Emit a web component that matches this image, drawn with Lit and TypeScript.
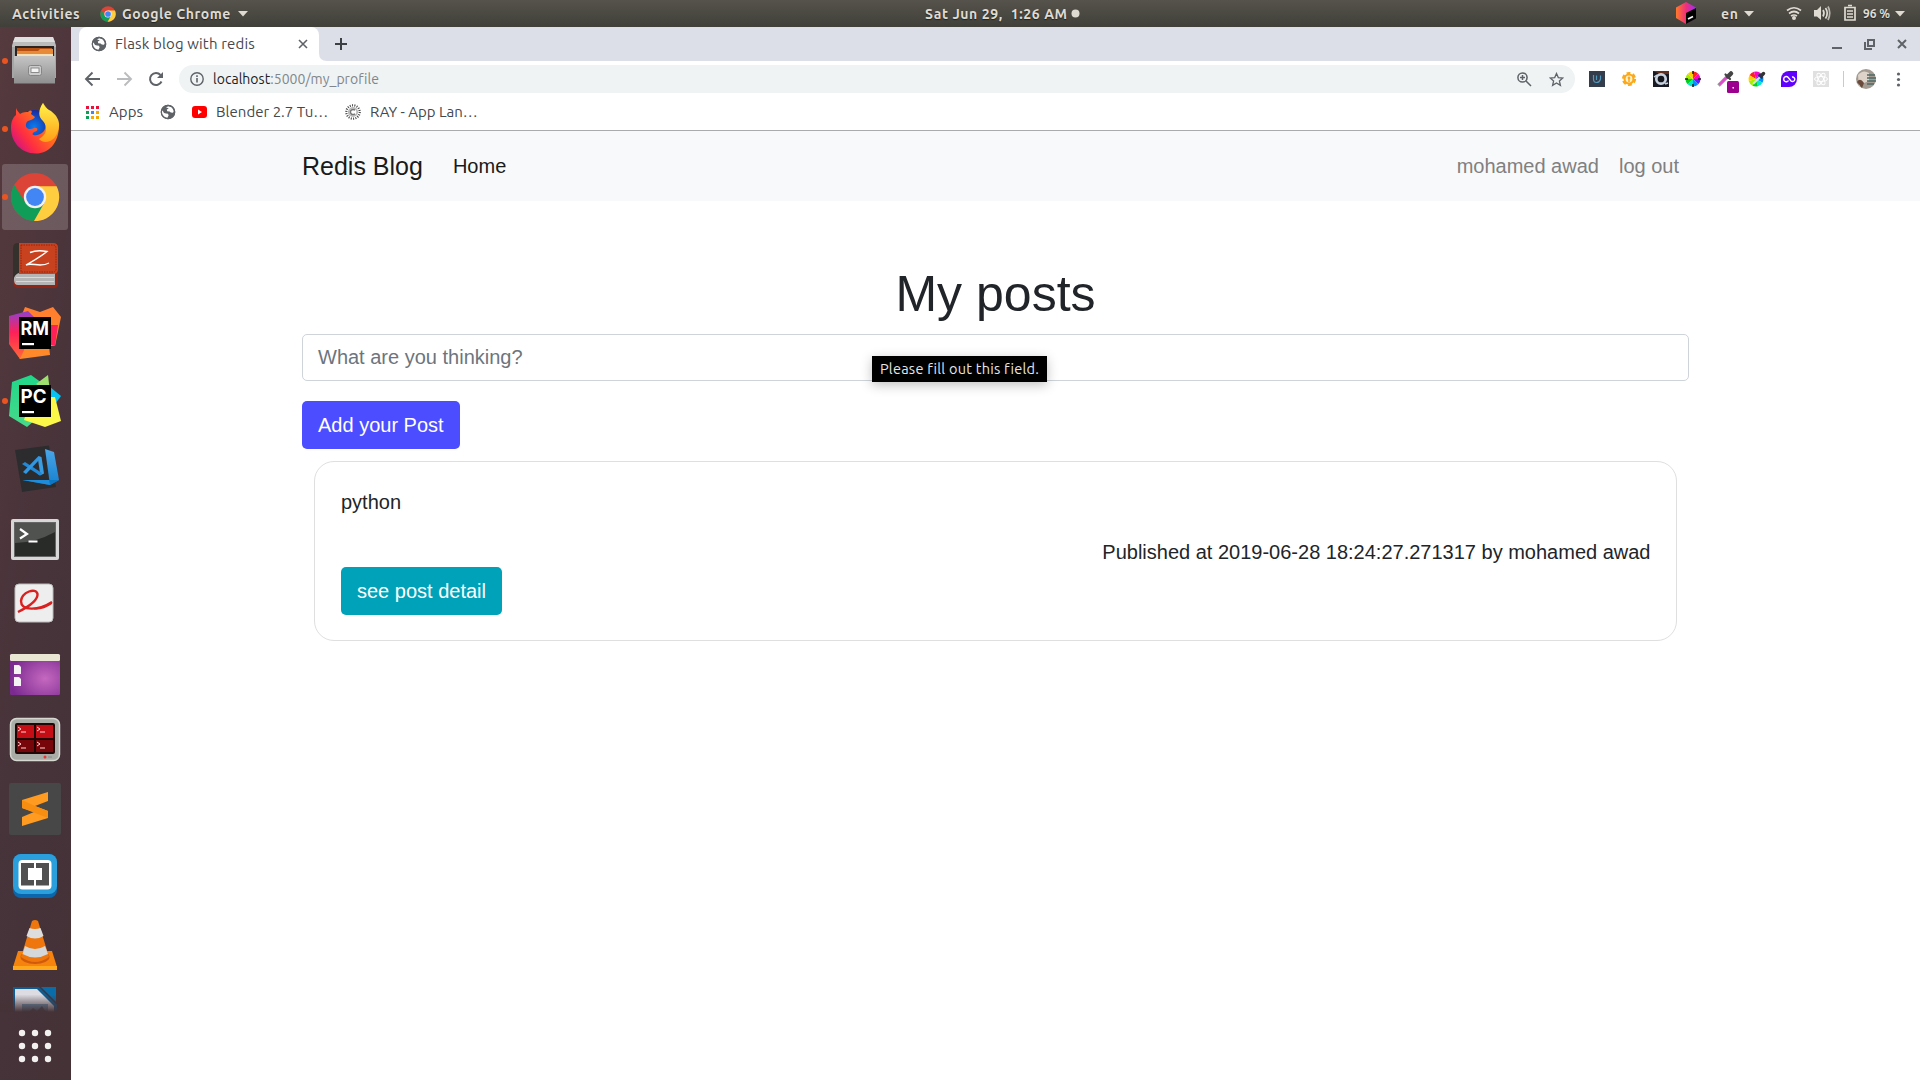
import { LitElement, html, svg, css } from "lit";
import { customElement } from "lit/decorators.js";

const globe = html`<svg class="ic" width="16" height="16" viewBox="0 0 16 16"><circle cx="8" cy="8" r="7.2" fill="#5f6368"/><path d="M2.600 6.500 4 9 6 9.500 8 9.800 8.600 11.500 7.200 14 4.500 13 2 10.500 1.800 7Z" fill="#fff"/><path d="M6 3.200 8.500 2.300 12 3.600 13.800 7 13 8.800 10.800 8.600 9.600 7.400 7.200 7.200 6.800 5.600 8.800 4.600Z" fill="#fff"/><circle cx="8" cy="8" r="6.700" fill="none" stroke="#5f6368" stroke-width="1.300"/></svg>`;

const chromeLogo = (cx: number, cy: number, r: number) => svg`
  <g transform="translate(${cx} ${cy}) scale(${r / 24})">
    <circle r="24" fill="#db4437"/>
    <path d="M-20.8-12A24 24 0 0 0 -1 24L10.4 6 0 0-9.6 5.5Z" fill="#0f9d58"/>
    <path d="M21.6-10.8A24 24 0 0 1 -1 24L9.8 5 0-10.8Z" fill="#ffcd40"/>
    <circle r="11.2" fill="#f1f1f1"/><circle r="8.9" fill="#4285f4"/>
  </g>`;

const dockIcons = [
  svg`<path d="M15 37H53L56 46V78H54V82H14V78H12V46Z" fill="#a5a6a6"/><path d="M15 37H53L55 42H13Z" fill="#dfdfdf"/><path d="M13 42H55L56 47H12Z" fill="#bcbcbc"/>
   <rect x="15" y="46" width="39" height="11" fill="#2d2320"/><path d="M17 48H52V56H17Z" fill="#b54f12"/><path d="M17 51H38L40 49H53V56H17Z" fill="#e88b39"/><path d="M17 54H53V56H17Z" fill="#f7e0b7"/>
   <path d="M14 56H55V83.500H14Z" fill="url(#steel)"/><rect x="28.500" y="65.500" width="13" height="10" rx="2" fill="#ccc" stroke="#858585"/><rect x="31" y="68" width="8" height="4.500" fill="#f4f4f4" stroke="#777" stroke-width=".8"/>`,
  svg`<circle cx="34" cy="127" r="17" fill="url(#ffblue)"/>
   <path d="M16 108C17 111 19 112 20 114 23 112 26 112 28 112 31 109 33 111 31 114L35 117C33 121 27 119 26 124 25 129 30 130 34 128 38 127 39 131 34 132 29 136 39 137 44 131 48 125 44 116 40 112L43 103 59 125C59 144 48 153.500 36 153.500 20 153.500 11 141 11 128 11 122 13 117 16 115Z" fill="url(#fffire)"/>
   <path d="M43 103C38 110 38 117 43 121 48 127 47 135 39 139 44 145 55 142 58 131 62 121 55 113 49 110 46 108 44 106 43 103Z" fill="url(#ffyellow)"/>`,
  svg`<rect x="2" y="164" width="66" height="66" rx="3" fill="#fff" opacity=".18"/>${chromeLogo(35, 197, 24)}`,
  svg`<path d="M13 248Q13 243 18 243H53Q58 243 58 248V284Q58 288 54 288H17Q13 287 13 281Z" fill="#8f2615"/><path d="M14 277Q14 273 18 273H55V285H18Q14 285 14 280Z" fill="#b4b4b4"/><path d="M16 277.500H54M16 281.500H54" stroke="#d8d8d8"/>
   <path d="M19 243H53Q58 243 58 248V269Q58 274 53 274H19Z" fill="#c9421f"/><path d="M13 248Q13 243 18 243H19V273Q15 274 13 280Z" fill="#34312c"/><path d="M21 245H53Q56 245 56 248V269Q56 272 53 272H21Z" fill="none" stroke="#7d2111" stroke-width=".8" stroke-dasharray="1.500 1"/>
   <path d="M30 252.500Q37 249.500 47 251.500C40 257 35 260 26 265 32 262 40 268 49 263" fill="none" stroke="#fff" stroke-width="1.400"/>`,
  svg`<path d="M25 307 40 312 53 307 61 317 55 346 49 346 50 355 20 359 15 349 19 322Z" fill="url(#rmb)"/><path d="M9 316 28 311 35 318 24 350 20 359 9 344Z" fill="url(#rma)"/><path d="M51 325H58L55 346 48 344Z" fill="#ff2058"/><rect x="19" y="317" width="32" height="32"/><text x="20.500" y="334.500" class="jb" textLength="28.500" lengthAdjust="spacingAndGlyphs">RM</text><rect x="22" y="343" width="12" height="2.200" fill="#fff"/>`,
  svg`<path d="M12 382 31 375 42 383 35 420 27 427 9 416Z" fill="url(#pca)"/><path d="M48 375 50 392 36 384Z" fill="#9ee06f"/><path d="M50 387 61 396 52 408Z" fill="#07c3f2"/><path d="M51 397H55L61 421 45 427 24 420 28 407Z" fill="#fcf84a"/><rect x="19" y="385" width="32" height="32"/><text x="20.500" y="402.500" class="jb" textLength="26" lengthAdjust="spacingAndGlyphs">PC</text><rect x="22" y="411" width="12" height="2.200" fill="#fff"/>`,
  svg`<path d="M15 450 49 445.500 56 487 22 492Z" fill="#2c2c2f"/><path d="M45 449 54 452 59 480 50 485Z" fill="url(#vs)"/><path d="M22.500 480 46 480 59 480 50 485Z" fill="#0b76c4"/><path d="M22.500 480 50 485 49 480Z" fill="#1e8cd8"/>
   <path d="M38.500 456 41.500 457 44 473.500 40 475.500 37 473.500 40 473 38 459.500Z" fill="#3a9de2"/><path d="M22 464 25 462 42 473 40 475.500Z" fill="#2188d6"/><path d="M38.500 456 40 459 26 474 23 472Z" fill="#3296e0"/>`,
  svg`<rect x="11" y="519" width="48" height="41" rx="2" fill="#d7d7d7"/><rect x="14.500" y="522.500" width="41" height="34" fill="#292b29" stroke="#666"/><path d="M15 523H55V532Q35 543 15 543Z" fill="#505250"/><path d="M20 529 27 534 20 538.500" fill="none" stroke="#fff" stroke-width="2.200"/><path d="M28.500 541.500H37.500" stroke="#fff" stroke-width="2"/>`,
  svg`<rect x="15" y="584" width="38" height="38" rx="4" fill="#eee" stroke="#bdbdbd"/><path d="M18 612C30 606 38 600 37.500 594 36 587 22 592 21 601 21 611 38 611 52 602" fill="none" stroke="#d92121" stroke-width="2.400"/><path d="M34 608.500Q44 607 52 601.500V604Q44 610 34 609.500Z" fill="#d92121"/>`,
  svg`<rect x="10" y="654" width="50" height="41" rx="1.500" fill="url(#purple)"/><rect x="10" y="654" width="50" height="7" rx="1.500" fill="#eae6d4"/><path d="M14 665H19L21 667V674H14ZM14 677H19L21 679V686H14Z" fill="#f4f4f4"/>`,
  svg`<rect x="10.500" y="718.500" width="49" height="42" rx="6" fill="#aaada7" stroke="#d7d8d2" stroke-width="1.500"/><rect x="15" y="723" width="40" height="31" rx="2" fill="#220505"/><path d="M17 725H34V738H17ZM36 725H53V738H36Z" fill="#c40d14"/><path d="M17 740H34V752H17ZM36 740H53V752H36Z" fill="#760609"/><path d="M18 727 21 729 18 731M21 732H26M37 727 40 729 37 731M40 732H45M18 742 21 744 18 746M21 748H26M37 742 40 744 37 746M40 748H45" fill="none" stroke="#ffd1d1"/><circle cx="45" cy="757" r="1.500" fill="#e33"/><path d="M48 757H52" stroke="#888"/>`,
  svg`<rect x="9" y="783" width="52" height="52" rx="2" fill="#474747"/><path d="M22 800 48 792V801L35 806 48 811V818L22 826V817L34 812 22 808Z" fill="#ff9b20"/><path d="M22 800V808L48 818V811L35 806Z" fill="#f78e12"/>`,
  svg`<rect x="13" y="854" width="44" height="44" rx="8" fill="#0b66ab"/><rect x="13" y="854" width="44" height="40" rx="8" fill="#2a9fdc"/><rect x="18.500" y="860" width="33" height="29.500" rx="4" fill="#fff"/><path d="M21 863H34V868H28V880H34V885.500H21ZM36 863H49V885.500H36V880H42V868H36Z" fill="#505050"/>`,
  svg`<path d="M18 951H52L57 967V969.500H13V967Z" fill="#f5830d"/><path d="M13 966H57V970H13Z" fill="#ffa81d"/><ellipse cx="35" cy="957" rx="14.500" ry="7" fill="#cf5a0c"/><path d="M32 921Q35 919 38 921L49 957Q35 967 21 957Z" fill="#ee760c"/><path d="M29.500 928Q35 930 40.500 928L43.500 936Q35 941 26.500 936Z" fill="#ddd"/><path d="M25 946Q35 952 45 946L48 954Q35 961 22.500 954Z" fill="#d4d8da"/>`,
];

const lastIcon = svg`<path d="M13 987H39L57 1005V1014H13Z" fill="#0b5d93"/><path d="M15 989H37L54 1006V1014H15Z" fill="#dddce2"/><path d="M41 987H56V1002Z" fill="#0a6da9"/><path d="M22 1004H48V1014H22Z" fill="#6f9dbb"/><path d="M27 1014 33 1008 37 1011 42 1006 47 1014Z" fill="#43505e"/>`;

@customElement("app-root")
export class AppRoot extends LitElement {
  static styles = css`
    :host { display: block; }
    * { box-sizing: border-box; }
    .desktop { width: 1920px; height: 1080px; display: grid; grid-template: 27px 1fr / 71px 1fr; overflow: hidden; background: #fff; font-family: Ubuntu, "Noto Sans", sans-serif; white-space: nowrap; }
    svg { display: block; flex: none; }
    .top { grid-column: 1 / 3; display: grid; grid-template-columns: 925px 1fr auto; align-items: center; background: linear-gradient(#55534b, #403f39); color: #dfdbd2; font-size: 14px; font-weight: 600; text-shadow: 0 1px 1px #222; }
    .row { display: flex; align-items: center; }
    .act { padding-left: 12px; width: 100px; letter-spacing: .6px; }
    .appname { padding-left: 6px; width: 122px; letter-spacing: .55px; }
    .clock { gap: 4px; }
    .time { width: 142px; letter-spacing: .6px; }
    .dock { display: flex; flex-direction: column; background: linear-gradient(100deg, #553a3e, #47333a 55%, #443237); }
    .last { height: 33px; overflow: hidden; }
    .browser { display: flex; flex-direction: column; min-width: 0; }
    .strip { height: 34px; background: #dcdfe7; display: flex; justify-content: space-between; color: #45484c; }
    .tab { margin-left: 8px; width: 240px; height: 34px; background: #fff; border-radius: 8px 8px 0 0; display: flex; align-items: center; padding-left: 12px; font-size: 15px; }
    .tabtitle { padding: 0 0 2px 8px; width: 191px; flex: none; letter-spacing: .15px; }
    .foot { align-self: flex-end; }
    .wins { gap: 22px; padding-right: 13px; }
    .tools { height: 38px; display: flex; align-items: center; padding-left: 13px; padding-bottom: 2px; }
    .nav { gap: 15px; }
    .omni { margin-left: 15px; width: 1396px; height: 28px; border-radius: 14px; background: #eff3f4; display: flex; align-items: center; padding: 0 11px; font-size: 14px; color: #80868b; }
    .url { flex: 1; padding-left: 9px; letter-spacing: .03px; }
    .host { color: #202124; }
    .starwrap { gap: 17px; }
    .marks { height: 31px; display: flex; align-items: center; padding-left: 15px; padding-bottom: 5px; font-size: 15px; color: #45484c; }
    .marks > span:not(.mg) { padding-bottom: 2px; }
    .m1 { padding-left: 10px; width: 61px; letter-spacing: .1px; } .m2 { padding-left: 9px; width: 138px; letter-spacing: .02px; } .m3 { padding-left: 9px; letter-spacing: -.02px; }
    .mg { margin-right: 16px; }
    .page { flex: 1; border-top: 1px solid #aaabad; background: #fff; font: 20px/30px "Liberation Sans", Arial, sans-serif; color: #212529; position: relative; }
    .navbar { height: 70px; background: #f8f9fb; display: flex; align-items: center; padding: 0 241px 0 231px; color: #1a1a1a; }
    .brand { font-size: 25px; margin-right: 30px; }
    .muted { color: #808080; margin-left: 20px; }
    .push { margin-left: auto; }
    .container { width: 1387px; margin-left: 231px; padding-top: 63px; }
    h1 { margin: 0 0 10px; text-align: center; font-size: 50px; line-height: 60px; font-weight: 400; }
    .field { height: 47px; border: 1px solid #ced4da; border-radius: 5px; padding: 0 15px; line-height: 45px; color: #6c757d; margin-bottom: 20px; }
    .btn { display: inline-flex; height: 48px; align-items: center; padding: 0 16px; border-radius: 5px; color: #fff; background: #4b4dff; }
    .form { display: flex; flex-direction: column; align-items: stretch; }
    .form .btn { align-self: flex-start; }
    .card { margin: 12px 12px 0; height: 180px; border: 1px solid #dfdfdf; border-radius: 20px; padding: 25px 25.500px 25px 26px; display: flex; flex-direction: column; align-items: flex-start; }
    .pub { align-self: flex-end; margin: 20px 0 0; }
    .info { background: #00a2b9; }
    .tip { position: absolute; left: 801px; top: 225px; height: 26px; width: 175px; background: #000; color: #e6e6e6; font: 14.500px/25px Ubuntu, "Noto Sans", sans-serif; letter-spacing: .25px; text-align: center; box-shadow: 0 3px 12px rgba(0,0,0,.25); }
    .jb { font: 700 18.500px Inter, sans-serif; fill: #fff; }
  `;

  render() {
    return html`
    <div class="desktop">
      <header class="top">
        <div class="row"><span class="act">Activities</span>
          <svg width="16" height="16" viewBox="0 0 16 16">${chromeLogo(8, 8, 7.7)}</svg>
          <span class="appname">Google Chrome</span><svg width="10" height="6"><path d="M0 0H10L5 5.500Z" fill="#dfdbd2"/></svg></div>
        <div class="row clock"><span class="time">Sat Jun 29,&nbsp; 1:26 AM</span><svg width="9" height="9"><circle cx="4.500" cy="4.500" r="4" fill="#dfdbd2"/></svg></div>
        ${this.tray()}
      </header>
      <nav class="dock">
        ${dockIcons.map((icon, i) => this.dockSlot(icon, i))}
        <div class="last"><svg width="71" height="33" viewBox="0 979 71 33"><defs><linearGradient id="fade" x2="0" y2="1"><stop offset=".3" stop-color="#443237" stop-opacity="0"/><stop offset="1" stop-color="#443237"/></linearGradient></defs>${lastIcon}<rect x="0" y="987" width="71" height="25" fill="url(#fade)"/></svg></div>
        <svg width="71" height="68" viewBox="0 1012 71 68">${[0, 1, 2].map((r) => [0, 1, 2].map((c) => svg`<circle cx="${22 + 13 * c}" cy="${1033 + 13 * r}" r="3.200" fill="#f3f1f0"/>`))}</svg>
      </nav>
      <main class="browser">
        <div class="strip">
          <div class="row"><div class="tab">${globe}<span class="tabtitle">Flask blog with redis</span>
            <svg width="10" height="10"><path d="M1 1 9 9M9 1 1 9" stroke="#5f6368" stroke-width="1.600"/></svg></div>
            <svg class="foot" width="8" height="8"><path d="M0 0Q0 8 8 8H0Z" fill="#fff"/></svg>
            <svg width="28" height="34"><path d="M8 17H20M14 11V23" stroke="#3c4043" stroke-width="2"/></svg></div>
          <div class="row wins">
            <svg width="10" height="12"><path d="M0 10H10" stroke="#5f6368" stroke-width="2"/></svg>
            <svg width="11" height="11"><path d="M1 3V10H8M4 1H10V7H4Z" fill="none" stroke="#5f6368" stroke-width="2"/></svg>
            <svg width="10" height="10"><path d="M1 1 9 9M9 1 1 9" stroke="#5f6368" stroke-width="2"/></svg></div>
        </div>
        <div class="tools">
          <div class="row nav">
            <svg width="18" height="16"><path d="M16 8H2.500M8.500 1.500 2 8 8.500 14.500" fill="none" stroke="#5f6368" stroke-width="1.900"/></svg>
            <svg width="16" height="16"><path d="M0 8H13.500M7.500 1.500 14 8 7.500 14.500" fill="none" stroke="#babcbe" stroke-width="1.900"/></svg>
            <svg width="16" height="16"><path d="M13.500 10.500A6 6 0 1 1 12.500 4" fill="none" stroke="#5f6368" stroke-width="2"/><path d="M15 1V7H9Z" fill="#5f6368"/></svg>
          </div>
          <div class="omni"><svg width="14" height="14"><circle cx="7" cy="7" r="6.200" fill="none" stroke="#5f6368" stroke-width="1.400"/><path d="M7 6V10.500M7 3.300V5" stroke="#5f6368" stroke-width="1.600"/></svg>
            <span class="url"><span class="host">localhost</span>:5000/my_profile</span>
            <div class="row starwrap"><svg width="15" height="15"><circle cx="5.500" cy="5.500" r="4.600" fill="none" stroke="#5f6368" stroke-width="1.500"/><path d="M9 9 14 14M3 5.500H8M5.500 3V8" stroke="#5f6368" stroke-width="1.500"/></svg>
            <svg width="15" height="15" viewBox="0 0 15 15"><path d="M7.500 1.500 9.300 5.600 13.800 6 10.400 9 11.400 13.400 7.500 11 3.600 13.400 4.600 9 1.200 6 5.700 5.600Z" fill="none" stroke="#5f6368" stroke-width="1.300"/></svg></div></div>
          ${this.extensions()}
        </div>
        <div class="marks">
          <svg width="13" height="13">${["#e8123c", "#e8123c", "#e8123c", "#0f9d58", "#4285f4", "#f4a800", "#0f9d58", "#f4a800", "#f4a800"].map((c, i) => svg`<rect x="${(i % 3) * 5}" y="${Math.floor(i / 3) * 5}" width="3" height="3" fill="${c}"/>`)}</svg>
          <span class="m1">Apps</span><span class="mg">${globe}</span>
          <svg width="15" height="12"><rect width="15" height="12" rx="3" fill="#f00"/><path d="M6 3.500V8.500L10 6Z" fill="#fff"/></svg><span class="m2">Blender 2.7 Tu…</span>
          <svg width="16" height="16"><circle cx="8" cy="8" r="6.700" fill="none" stroke="#444" stroke-width="2.200" stroke-dasharray="1 1.340"/><circle cx="8" cy="8" r="4.200" fill="none" stroke="#bbb" stroke-width="1.800"/><path d="M10 6.300A2.600 2.600 0 1 0 10 9.700" fill="none" stroke="#777" stroke-width="1.500"/></svg><span class="m3">RAY - App Lan…</span>
        </div>
        <div class="page">
          <div class="navbar"><span class="brand">Redis Blog</span><span>Home</span><span class="muted push">mohamed awad</span><span class="muted">log out</span></div>
          <div class="container"><h1>My posts</h1>
            <div class="form"><div class="field">What are you thinking?</div><div class="btn">Add your Post</div></div>
            <article class="card"><div>python</div><div class="pub">Published at 2019-06-28 18:24:27.271317 by mohamed awad</div><div class="btn info">see post detail</div></article>
          </div>
          <div class="tip">Please fill out this field.</div>
        </div>
      </main>
    </div>`;
  }

  dockSlot(icon: unknown, i: number) {
    const dot = [0, 1, 2, 5].includes(i);
    return html`<svg width="71" height="68" viewBox="0 ${27 + 68 * i} 71 68">
      <defs>
        <linearGradient id="steel" x2="0" y2="1"><stop stop-color="#c5c5c5"/><stop offset="1" stop-color="#8f8f8f"/></linearGradient>
        <radialGradient id="ffblue"><stop stop-color="#0a7df0"/><stop offset="1" stop-color="#1a2a9c"/></radialGradient>
        <linearGradient id="fffire" x1="1" y1="0" x2="0" y2=".8"><stop stop-color="#ffb01c"/><stop offset=".45" stop-color="#ff6a20"/><stop offset=".75" stop-color="#ff2f40"/><stop offset="1" stop-color="#d0108a"/></linearGradient>
        <linearGradient id="ffyellow" x2="0" y2="1"><stop stop-color="#fff34a"/><stop offset="1" stop-color="#ff9d18"/></linearGradient>
        <linearGradient id="rma" x2="0" y2="1"><stop stop-color="#8f41cf"/><stop offset=".45" stop-color="#ff2058"/><stop offset="1" stop-color="#ff6a38"/></linearGradient>
        <linearGradient id="rmb" x2="0" y2="1"><stop stop-color="#ff7e30"/><stop offset="1" stop-color="#ff8a2a"/></linearGradient>
        <linearGradient id="pca" x2="0" y2="1"><stop stop-color="#21d789"/><stop offset="1" stop-color="#47d98b"/></linearGradient>
        <linearGradient id="vs" x2="0" y2="1"><stop stop-color="#4aa6e8"/><stop offset="1" stop-color="#1680cf"/></linearGradient>
        <radialGradient id="purple" cx=".7" cy=".6" r=".7"><stop stop-color="#c568c0"/><stop offset="1" stop-color="#7b2b90"/></radialGradient>
      </defs>
      ${icon}${dot ? svg`<circle cx="5" cy="${61 + 68 * i}" r="3" fill="#e95420"/>` : ""}
    </svg>`;
  }

  tray() {
    return html`<svg width="250" height="27" viewBox="1670 0 250 27">
      <defs><linearGradient id="tb" x2="1" y2="0"><stop stop-color="#ff7a2a"/><stop offset=".5" stop-color="#f0307a"/><stop offset="1" stop-color="#9a2bff"/></linearGradient></defs>
      <path d="M1686 2 1696 7.500V18L1686 24 1676 18V7.500Z" fill="url(#tb)"/><path d="M1686 13 1696 8V18.500L1686 24Z"/><path d="M1688 19 1693 16.500" stroke="#fff" stroke-width="1.800"/>
      <g fill="#dfdbd2" font-family="Ubuntu, Noto Sans" font-weight="600"><text x="1721" y="18.500" font-size="14" textLength="17">en</text><path d="M1744 11H1754L1749 16.500Z"/>
      <text x="1863" y="17.500" font-size="12" textLength="27">96 %</text><path d="M1895 11H1905L1900 16.500Z"/><circle cx="1794" cy="18" r="2"/><path d="M1814 10H1817L1821 6V20L1817 16.500H1814Z"/></g>
      <g fill="none" stroke="#dfdbd2" stroke-width="1.700"><path d="M1787 10.500Q1794 5 1801 10.500M1789 13.500Q1794 9.500 1799 13.500M1791 16Q1794 14 1797 16M1823 10Q1825 13 1823 16.500M1825.500 8Q1829 13 1825.500 18.500" /><path opacity=".75" d="M1828 6.500Q1831.500 13 1828 20"/><path d="M1845 7.500H1855V20H1845ZM1848 5.500H1852M1847 11H1853M1847 14H1853M1847 17H1853"/></g></svg>`;
  }

  extensions() {
    const wheel = ["#ff2020", "#ff00c8", "#5a20ff", "#0090ff", "#00e8d0", "#00d020", "#a0f000", "#ffd000"];
    const wedges = (cx: number) => wheel.map((c, i) => svg`<path transform="rotate(${i * 45} ${cx} 79)" d="M${cx} 79V71.500A7.500 7.500 0 0 1 ${cx + 5.3} 73.700Z" fill="${c}"/>`);
    return html`<svg width="345" height="36" viewBox="1575 61 345 36">
      <rect x="1589" y="71" width="16" height="16" fill="#343d4b"/><path d="M1593.500 75V79Q1593.500 82.500 1596.500 82.500T1600.500 79V75.500M1596.500 75.500V80" fill="none" stroke="#5297bd" stroke-width="1.200"/>
      <circle cx="1629" cy="79" r="5.500" fill="#fba91a"/><circle cx="1629" cy="79" r="5.800" fill="none" stroke="#fba91a" stroke-width="2.600" stroke-dasharray="3.700 2.370"/><circle cx="1629" cy="79" r="3.400" fill="#fff2cc"/><circle cx="1629" cy="78" r="1.400" fill="#fba91a"/><path d="M1629 78V82" stroke="#fba91a" stroke-width="1.500"/>
      <rect x="1653" y="71" width="16" height="16" fill="#171a22"/><path d="M1653 71H1669V74H1660Z" fill="#63301e"/><circle cx="1661" cy="79" r="4.700" fill="#15171c" stroke="#c8d2df" stroke-width="2.700"/><path d="M1654 77 1657 75M1665 84 1668 83" stroke="#c8d2df" stroke-width="1.500"/>
      ${wedges(1693)}<path d="M1685 79H1688M1698 79H1701M1693 71V74M1693 84V87" stroke="#222" stroke-width="1.600"/>
      <path d="M1718.500 85.500 1728 76" stroke="#999" stroke-width="3.600"/><path d="M1719.500 84.500 1727 77" stroke="#e048d0" stroke-width="2.200"/><path d="M1725.500 74.500 1730 79" stroke="#444" stroke-width="2.200" stroke-linecap="round"/><path d="M1728 76.500 1731 73.500" stroke="#444" stroke-width="4.500" stroke-linecap="round"/><rect x="1727" y="81" width="12" height="12" rx="1.500" fill="#9b008e"/><rect x="1732.500" y="87" width="1.500" height="1.500" fill="#fff"/>
      <g transform="rotate(-60 1756 79)">${wedges(1756)}</g><path d="M1753 84 1761 76" stroke="#ddd" stroke-width="2.200"/><path d="M1758.500 74.500 1762.500 78.500" stroke="#333" stroke-width="1.800"/><path d="M1761 76 1763.500 73.500" stroke="#333" stroke-width="3.500" stroke-linecap="round"/>
      <path d="M1789 71H1797V79A8 8 0 0 1 1789 87H1781V79A8 8 0 0 1 1789 71Z" fill="#6200ff"/><path d="M1788.500 80.500A2.600 2.600 0 1 1 1788 77.200L1791 81A2.300 2.300 0 1 0 1792 77" fill="none" stroke="#fff" stroke-width="1.400"/>
      <rect x="1813" y="71" width="16" height="16" fill="#e0e0e0"/><g fill="none" stroke="#fff"><ellipse cx="1821" cy="79" rx="6.500" ry="2.500"/><ellipse cx="1821" cy="79" rx="6.500" ry="2.500" transform="rotate(60 1821 79)"/><ellipse cx="1821" cy="79" rx="6.500" ry="2.500" transform="rotate(120 1821 79)"/></g>
      <path d="M1843.500 71V87" stroke="#c8cacc"/>
      <circle cx="1866" cy="79" r="10" fill="#a39b91"/><path d="M1858 75Q1863 69 1869 73V81Q1863 83 1859 86Z" fill="#ddd3c9"/><path d="M1857 82Q1860 77 1864 83L1862 88Z" fill="#6a4a3a"/><path d="M1867 75H1875M1867 78H1876M1867 81H1876M1867 84H1874" stroke="#4d6966" stroke-width="1.500"/>
      <g fill="#5f6368"><circle cx="1898.500" cy="74" r="1.600"/><circle cx="1898.500" cy="79.500" r="1.600"/><circle cx="1898.500" cy="85" r="1.600"/></g></svg>`;
  }
}
